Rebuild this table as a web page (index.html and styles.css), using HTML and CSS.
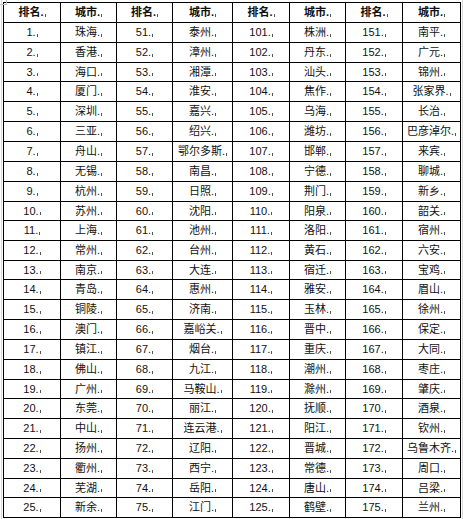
FILE: index.html
```html
<!DOCTYPE html>
<html lang="zh-CN">
<head>
<meta charset="utf-8">
<title>城市排名</title>
<link rel="stylesheet" href="styles.css">
</head>
<body>
<div class="handle"></div>
<div class="edge-left"></div>
<div class="edge-right"></div>
<div class="grid">
<div class="c h">排名.<i></i></div><div class="c h">城市.<i></i></div><div class="c h">排名.<i></i></div><div class="c h">城市.<i></i></div><div class="c h">排名.<i></i></div><div class="c h">城市.<i></i></div><div class="c h">排名.<i></i></div><div class="c h">城市.<i></i></div>
<div class="c">1.<i></i></div><div class="c">珠海.<i></i></div><div class="c">51.<i></i></div><div class="c">泰州.<i></i></div><div class="c">101.<i></i></div><div class="c">株洲.<i></i></div><div class="c">151.<i></i></div><div class="c">南平.<i></i></div>
<div class="c">2.<i></i></div><div class="c">香港.<i></i></div><div class="c">52.<i></i></div><div class="c">漳州.<i></i></div><div class="c">102.<i></i></div><div class="c">丹东.<i></i></div><div class="c">152.<i></i></div><div class="c">广元.<i></i></div>
<div class="c">3.<i></i></div><div class="c">海口.<i></i></div><div class="c">53.<i></i></div><div class="c">湘潭.<i></i></div><div class="c">103.<i></i></div><div class="c">汕头.<i></i></div><div class="c">153.<i></i></div><div class="c">锦州.<i></i></div>
<div class="c">4.<i></i></div><div class="c">厦门.<i></i></div><div class="c">54.<i></i></div><div class="c">淮安.<i></i></div><div class="c">104.<i></i></div><div class="c">焦作.<i></i></div><div class="c">154.<i></i></div><div class="c">张家界.<i></i></div>
<div class="c">5.<i></i></div><div class="c">深圳.<i></i></div><div class="c">55.<i></i></div><div class="c">嘉兴.<i></i></div><div class="c">105.<i></i></div><div class="c">乌海.<i></i></div><div class="c">155.<i></i></div><div class="c">长治.<i></i></div>
<div class="c">6.<i></i></div><div class="c">三亚.<i></i></div><div class="c">56.<i></i></div><div class="c">绍兴.<i></i></div><div class="c">106.<i></i></div><div class="c">潍坊.<i></i></div><div class="c">156.<i></i></div><div class="c">巴彦淖尔.<i></i></div>
<div class="c">7.<i></i></div><div class="c">舟山.<i></i></div><div class="c">57.<i></i></div><div class="c">鄂尔多斯.<i></i></div><div class="c">107.<i></i></div><div class="c">邯郸.<i></i></div><div class="c">157.<i></i></div><div class="c">来宾.<i></i></div>
<div class="c">8.<i></i></div><div class="c">无锡.<i></i></div><div class="c">58.<i></i></div><div class="c">南昌.<i></i></div><div class="c">108.<i></i></div><div class="c">宁德.<i></i></div><div class="c">158.<i></i></div><div class="c">聊城.<i></i></div>
<div class="c">9.<i></i></div><div class="c">杭州.<i></i></div><div class="c">59.<i></i></div><div class="c">日照.<i></i></div><div class="c">109.<i></i></div><div class="c">荆门.<i></i></div><div class="c">159.<i></i></div><div class="c">新乡.<i></i></div>
<div class="c">10.<i></i></div><div class="c">苏州.<i></i></div><div class="c">60.<i></i></div><div class="c">沈阳.<i></i></div><div class="c">110.<i></i></div><div class="c">阳泉.<i></i></div><div class="c">160.<i></i></div><div class="c">韶关.<i></i></div>
<div class="c">11.<i></i></div><div class="c">上海.<i></i></div><div class="c">61.<i></i></div><div class="c">池州.<i></i></div><div class="c">111.<i></i></div><div class="c">洛阳.<i></i></div><div class="c">161.<i></i></div><div class="c">宿州.<i></i></div>
<div class="c">12.<i></i></div><div class="c">常州.<i></i></div><div class="c">62.<i></i></div><div class="c">台州.<i></i></div><div class="c">112.<i></i></div><div class="c">黄石.<i></i></div><div class="c">162.<i></i></div><div class="c">六安.<i></i></div>
<div class="c">13.<i></i></div><div class="c">南京.<i></i></div><div class="c">63.<i></i></div><div class="c">大连.<i></i></div><div class="c">113.<i></i></div><div class="c">宿迁.<i></i></div><div class="c">163.<i></i></div><div class="c">宝鸡.<i></i></div>
<div class="c">14.<i></i></div><div class="c">青岛.<i></i></div><div class="c">64.<i></i></div><div class="c">惠州.<i></i></div><div class="c">114.<i></i></div><div class="c">雅安.<i></i></div><div class="c">164.<i></i></div><div class="c">眉山.<i></i></div>
<div class="c">15.<i></i></div><div class="c">铜陵.<i></i></div><div class="c">65.<i></i></div><div class="c">济南.<i></i></div><div class="c">115.<i></i></div><div class="c">玉林.<i></i></div><div class="c">165.<i></i></div><div class="c">徐州.<i></i></div>
<div class="c">16.<i></i></div><div class="c">澳门.<i></i></div><div class="c">66.<i></i></div><div class="c">嘉峪关.<i></i></div><div class="c">116.<i></i></div><div class="c">晋中.<i></i></div><div class="c">166.<i></i></div><div class="c">保定.<i></i></div>
<div class="c">17.<i></i></div><div class="c">镇江.<i></i></div><div class="c">67.<i></i></div><div class="c">烟台.<i></i></div><div class="c">117.<i></i></div><div class="c">重庆.<i></i></div><div class="c">167.<i></i></div><div class="c">大同.<i></i></div>
<div class="c">18.<i></i></div><div class="c">佛山.<i></i></div><div class="c">68.<i></i></div><div class="c">九江.<i></i></div><div class="c">118.<i></i></div><div class="c">潮州.<i></i></div><div class="c">168.<i></i></div><div class="c">枣庄.<i></i></div>
<div class="c">19.<i></i></div><div class="c">广州.<i></i></div><div class="c">69.<i></i></div><div class="c">马鞍山.<i></i></div><div class="c">119.<i></i></div><div class="c">滁州.<i></i></div><div class="c">169.<i></i></div><div class="c">肇庆.<i></i></div>
<div class="c">20.<i></i></div><div class="c">东莞.<i></i></div><div class="c">70.<i></i></div><div class="c">丽江.<i></i></div><div class="c">120.<i></i></div><div class="c">抚顺.<i></i></div><div class="c">170.<i></i></div><div class="c">酒泉.<i></i></div>
<div class="c">21.<i></i></div><div class="c">中山.<i></i></div><div class="c">71.<i></i></div><div class="c">连云港.<i></i></div><div class="c">121.<i></i></div><div class="c">阳江.<i></i></div><div class="c">171.<i></i></div><div class="c">钦州.<i></i></div>
<div class="c">22.<i></i></div><div class="c">扬州.<i></i></div><div class="c">72.<i></i></div><div class="c">辽阳.<i></i></div><div class="c">122.<i></i></div><div class="c">晋城.<i></i></div><div class="c">172.<i></i></div><div class="c">乌鲁木齐.<i></i></div>
<div class="c">23.<i></i></div><div class="c">衢州.<i></i></div><div class="c">73.<i></i></div><div class="c">西宁.<i></i></div><div class="c">123.<i></i></div><div class="c">常德.<i></i></div><div class="c">173.<i></i></div><div class="c">周口.<i></i></div>
<div class="c">24.<i></i></div><div class="c">芜湖.<i></i></div><div class="c">74.<i></i></div><div class="c">岳阳.<i></i></div><div class="c">124.<i></i></div><div class="c">唐山.<i></i></div><div class="c">174.<i></i></div><div class="c">吕梁.<i></i></div>
<div class="c">25.<i></i></div><div class="c">新余.<i></i></div><div class="c">75.<i></i></div><div class="c">江门.<i></i></div><div class="c">125.<i></i></div><div class="c">鹤壁.<i></i></div><div class="c">175.<i></i></div><div class="c">兰州.<i></i></div>
</div>
</body>
</html>
```

FILE: styles.css
```css
html, body {
  margin: 0;
  background: #fff;
}
body {
  padding: 2px 0 0 3px;
  font-family: "Liberation Sans", "Noto Sans CJK SC", sans-serif;
  font-size: 11px;
  color: #111;
  position: relative;
  width: 463px;
  height: 519px;
  box-sizing: border-box;
  overflow: hidden;
}
.grid {
  display: grid;
  width: 458px;
  box-sizing: border-box;
  padding: 1px;
  gap: 1px;
  background: #000;
  grid-template-columns: 56px 55px 55px 59px 56px 55px 56px 57px;
  grid-template-rows: 19px 19px 19px 18px 19px 19px 19px 19px 19px 19px 18px 19px 19px 18px 19px 19px 19px 19px 19px 18px 19px 19px 19px 19px 18px 19px;
}
.c {
  background: #fff;
  display: flex;
  align-items: center;
  justify-content: center;
  white-space: nowrap;
  line-height: 1;
}
.h {
  font-weight: bold;
}
.c i {
  display: inline-block;
  width: 1px;
  height: 3px;
  margin-left: 1px;
  margin-top: 5px;
  background: #555;
}
.handle {
  position: absolute;
  left: 0;
  top: 0;
  width: 7px;
  height: 5px;
  border: 1px solid #bbb;
  border-top: none;
  border-left: none;
  box-sizing: border-box;
}
.edge-left {
  position: absolute;
  left: 1px;
  top: 0;
  width: 1px;
  height: 519px;
  background: #d8d8d8;
}
.edge-right {
  position: absolute;
  left: 462px;
  top: 0;
  width: 1px;
  height: 519px;
  background: #d8d8d8;
}
```
